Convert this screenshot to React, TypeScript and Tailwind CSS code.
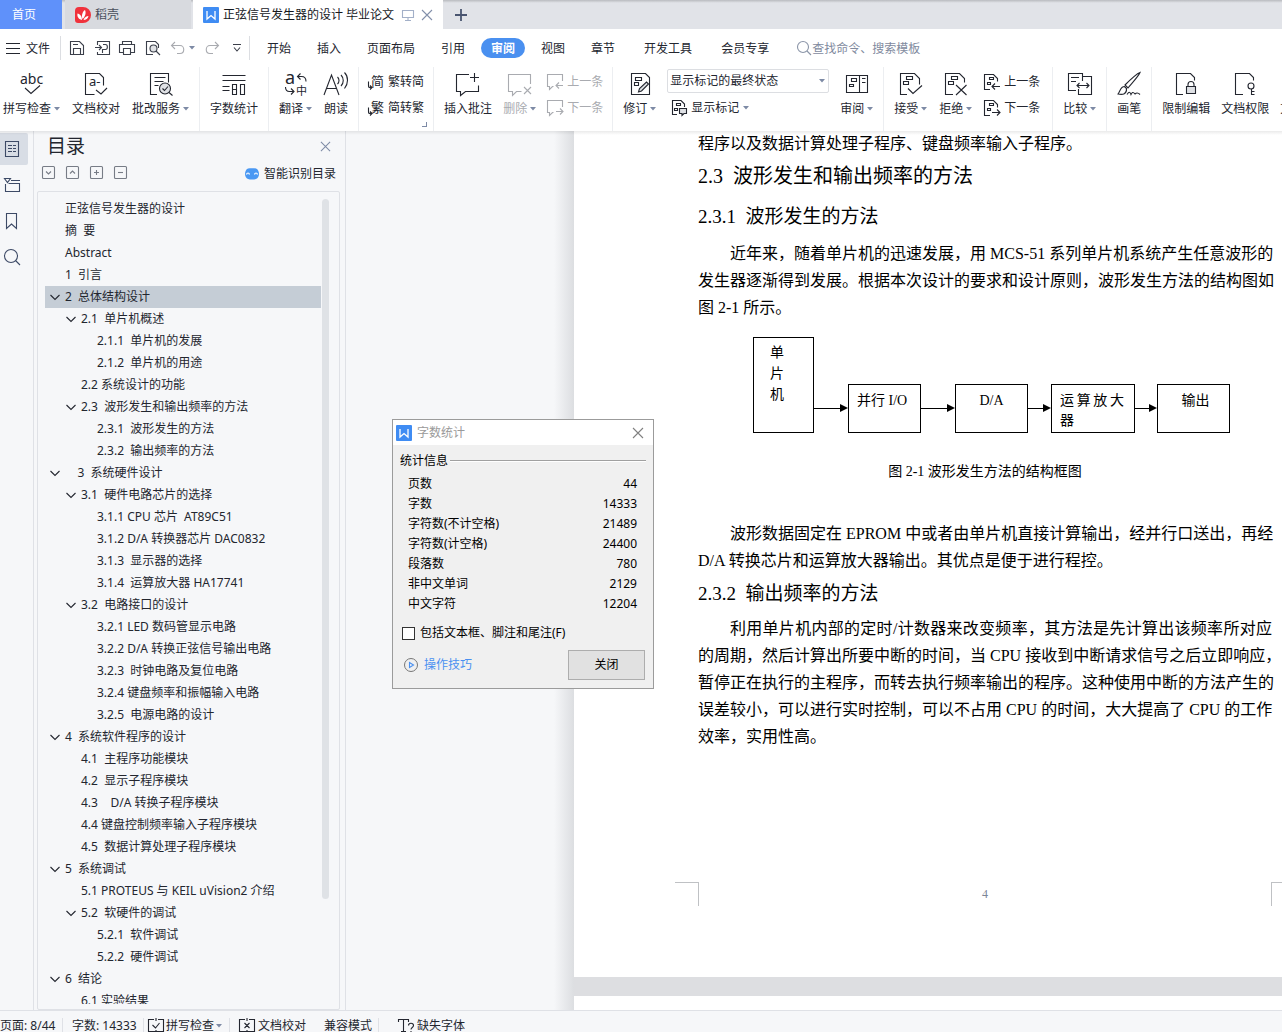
import type { ReactNode } from "react";

type IconProps = { children: ReactNode; box?: number; className?: string };

function Icon({ children, box = 24, className = "h-6 w-6" }: IconProps) {
  return (
    <svg
      aria-hidden="true"
      viewBox={`0 0 ${box} ${box}`}
      fill="none"
      stroke="currentColor"
      strokeWidth="1.1"
      className={`shrink-0 overflow-visible ${className}`}
    >
      {children}
    </svg>
  );
}

function Small({ children }: { children: ReactNode }) {
  return (
    <Icon box={16} className="h-4 w-4">
      {children}
    </Icon>
  );
}

function Caret() {
  return (
    <svg aria-hidden="true" viewBox="0 0 6 4" className="h-1 w-1.5 shrink-0 fill-[#7d8aa5]">
      <path d="M0 0h6L3 3.5z" />
    </svg>
  );
}

function Glyph({ x, y, size, children }: { x: number; y: number; size: number; children: string }) {
  return (
    <text x={x} y={y} fontSize={size} fill="currentColor" stroke="none">
      {children}
    </text>
  );
}

const marks = <path d="M7.5 4.500h6v3h-6zM4.500 9.500h5v3h-5z" />;
const smallMarks = <path d="M5.5 3.5h4v2h-4zM3.5 8.5h3v2h-3z" />;

const icons = {
  spell: (
    <Icon>
      <Glyph x={0} y={12} size={14}>abc</Glyph>
      <path d="M5 16l6 5.500 9-8" />
    </Icon>
  ),
  proof: (
    <Icon>
      <path d="M10.500 22.500h-9v-21h14l4 4v8M12 18l5 4 6-6" />
      <Glyph x={5} y={14} size={13}>a-</Glyph>
    </Icon>
  ),
  grade: (
    <Icon>
      <path d="M8 22.500H1.500v-21h18v9M5.500 5.500h11M5.500 9.500h9M5.500 13.500h4" />
      <circle cx="16" cy="16.500" r="5.500" fill="#dfe1e5" />
      <path d="M20 20.500l3.500 3M13.500 16.500l2 2 3.500-4" />
    </Icon>
  ),
  count: (
    <Icon>
      <path d="M.500 3.500h23M.500 8.500h23M.500 14.500h7M.500 18.500h7M10.500 12.500h4v10h-4zM10.500 17.500h4M18.500 12.500h4v10h-4z" />
    </Icon>
  ),
  translate: (
    <Icon>
      <Glyph x={1} y={12} size={18}>a</Glyph>
      <Glyph x={12} y={23} size={11}>中</Glyph>
      <path d="M16.500 1.500l-3 3 3 3M13.500 4.500h4c3 0 4.500 2 4.500 5M1.500 15c0 3 1 4.500 4 4.500h4M7 16.500l3 3-3 3" />
    </Icon>
  ),
  read: (
    <Icon>
      <path d="M0 23L7.500 3 15 23M3 16.500h9M13.500 5c2 2 2 5 0 7M17 3c3 3 3 8 0 11M20.500.500c4 4 4 11 0 16" />
    </Icon>
  ),
  toSimple: (
    <Small>
      <Glyph x={3} y={12} size={13}>简</Glyph>
      <path d="M.500 7.500v4c0 2 0 2 3 2M2 11.500l2 2-2 2" />
    </Small>
  ),
  toTraditional: (
    <Small>
      <Glyph x={3} y={12} size={13}>繁</Glyph>
      <path d="M.500 7.500v4c0 2 0 2 3 2M2 11.500l2 2-2 2" />
    </Small>
  ),
  comment: (
    <Icon>
      <path d="M13 2.500H.500v17h4v4l5-4h13v-6M18.500 1v9M14 5.500h9" />
    </Icon>
  ),
  remove: (
    <Icon>
      <path d="M22.500 12V2.500H.500v17h4v4l4-4h5M16 15l7 7M23 15l-7 7" />
    </Icon>
  ),
  prevComment: (
    <Small>
      <path d="M15.500 7V.500H.500v12h2v3l3-3h1M16 11.500H9M12 8.500l-3 3 3 3" />
    </Small>
  ),
  nextComment: (
    <Small>
      <path d="M15.500 7V.500H.500v12h2v3l3-3h1M9 11.500h7M13 8.500l3 3-3 3" />
    </Small>
  ),
  revise: (
    <Icon>
      <path d="M3.500 1.500h14l4 4v17h-18zM7.500 5.500h6v3h-6zM6.500 10.500h4v3h-4z" />
      <path d="M10.500 20l1-3.500 7-6.500 2 2-7 7z" fill="#dfe1e5" />
    </Icon>
  ),
  showMarks: (
    <Small>
      <path d="M6 14.500H1.500v-14H10l3.500 3.500v3" />
      {smallMarks}
      <path d="M8.500 8.500h7v5H13l-2 2v-2H8.500z" fill="#dfe1e5" />
    </Small>
  ),
  review: (
    <Icon>
      <path d="M1.500 3.500h21v17h-21zM14.500 3.500v17M6.500 6.500h5v3h-5zM4.500 12.500h4v2h-4zM17 6.500h3.500M17 10.500h3.500" />
    </Icon>
  ),
  accept: (
    <Icon>
      <path d="M8 22.500H1.500v-21h14l5 5v6M9 16.500l5 5 9-8" />
      {marks}
    </Icon>
  ),
  reject: (
    <Icon>
      <path d="M9 22.500H1.500v-21h14l5 5v4M12 13l10.500 10M22.500 13L12 23" />
      {marks}
    </Icon>
  ),
  prevChange: (
    <Small>
      <path d="M6 15.500H.500V.500h9l4 4v3M16 12.500H8M11 9.500l-3 3 3 3" />
      {smallMarks}
    </Small>
  ),
  nextChange: (
    <Small>
      <path d="M6 15.500H.500V.500h9l4 4v3M8 12.500h8M13 9.500l3 3-3 3" />
      {smallMarks}
    </Small>
  ),
  compare: (
    <Icon>
      <path d="M14.500 9V1.500H.500v17H8M14.500 4.500h9v18h-13V17M3 5.500h8M3 9.500h5M9 13.500h12M11.500 11L9 13.500l2.500 2.500M18.500 11l2.500 2.500-2.500 2.500" />
    </Icon>
  ),
  brush: (
    <Icon>
      <path d="M23 .500C19 2 12 9 8 13l3 3C15 11 21 5 23 .500zM7.500 14.500c-4 0-4 4-6.500 7.500 5 1 9 0 8.500-5.500zM10 22.500c2-3 3-3 4 0 1-2 2-3 4-.500 2-2 4-.500 5 .500" />
    </Icon>
  ),
  restrict: (
    <Icon>
      <path d="M9 22.500H2.500v-21h14l4 4v3" />
      <path d="M12.500 14.500h9v7h-9z" fill="#dfe1e5" />
      <path d="M14 14.500v-2c0-4 6-4 6 0v2" />
    </Icon>
  ),
  permission: (
    <Icon>
      <path d="M10 22.500H2.500v-21h14l4 4v3" />
      <circle cx="18" cy="14" r="3" />
      <path d="M18.500 17v6M18.500 19.500h3M18.500 22.500h3" />
    </Icon>
  ),
};

type ToolProps = { icon: ReactNode; label: string; caret?: boolean; muted?: boolean };

function Tool({ icon, label, caret, muted }: ToolProps) {
  return (
    <button className={`flex shrink-0 flex-col items-center gap-[5px] pt-[5px] ${muted ? "text-[#a9abb0]" : ""}`}>
      {icon}
      <span className="flex items-center gap-[3px] whitespace-nowrap leading-4">
        {label}
        {caret && <Caret />}
      </span>
    </button>
  );
}

function SmallTool({ icon, label, caret, muted }: ToolProps) {
  return (
    <button
      className={`flex h-[26px] items-center gap-1 whitespace-nowrap leading-4 ${muted ? "text-[#a9abb0]" : ""}`}
    >
      {icon}
      {label}
      {caret && <Caret />}
    </button>
  );
}

function Group({ children, className = "gap-[11px] px-2.5" }: { children: ReactNode; className?: string }) {
  return <div className={`flex shrink-0 border-r border-[#eceef1] ${className}`}>{children}</div>;
}

function WpsLogo() {
  return (
    <svg aria-hidden="true" viewBox="0 0 16 16" className="h-4 w-4 shrink-0">
      <rect width="16" height="16" rx="1" fill="#3f8cf3" />
      <path d="M4 4v8l4-3.500 4 3.500V4" fill="none" stroke="#fff" strokeWidth="1.300" />
    </svg>
  );
}

function Close({ className }: { className: string }) {
  return (
    <Icon box={12} className={className}>
      <path d="M1 1l10 10M11 1L1 11" />
    </Icon>
  );
}

function TitleTabs() {
  return (
    <div className="flex h-[29px] shrink-0 bg-[#e1e3e8] bg-linear-to-b from-[#b9bbbf] from-0% to-transparent to-10%">
      <button className="w-[62px] bg-[#5f91fa] pr-3.5 text-white">首页</button>
      <button className="ml-[3px] flex w-[126px] items-center gap-1 bg-[#d8dadf] pl-2.5 text-[#4a4f5c]">
        <svg aria-hidden="true" viewBox="0 0 16 16" className="h-4 w-4">
          <path d="M4 0h4a8 8 0 0 1 0 16H3a3 3 0 0 1-3-3V4a4 4 0 0 1 4-4z" fill="#f0323c" />
          <path d="M7 13C3 12 2 9 2.500 6.500 5 7 7 9 7 13zM7.500 12C6 8 8 4 10 3c1.500 3 0 7-2.500 9zM8.500 13c1-3 3-4 5-4-.500 2.500-2.500 4-5 4z" fill="#fff" />
        </svg>
        稻壳
      </button>
      <div className="ml-0.5 flex w-[250px] items-center gap-1 bg-white pl-2.5 text-[#16181d]">
        <WpsLogo />
        <span className="whitespace-nowrap">正弦信号发生器的设计 毕业论文</span>
        <span className="flex flex-1 items-center justify-between pl-1 pr-2.5 text-[#a3b0c8]">
          <Icon box={12} className="h-3 w-3">
            <path d="M.500 1.500h11v7H.500zM6 9v2.500M3 11.500h6" />
          </Icon>
          <button aria-label="关闭标签">
            <Close className="h-3 w-3 text-[#8390ab]" />
          </button>
        </span>
      </div>
      <button aria-label="新建" className="px-3 text-[#4a5570]">
        <Icon box={12} className="h-3 w-3">
          <path d="M6 0v12M0 6h12" strokeWidth="1.800" />
        </Icon>
      </button>
    </div>
  );
}

const menuTabs = [
  { name: "开始" },
  { name: "插入" },
  { name: "页面布局" },
  { name: "引用" },
  { name: "审阅", active: true },
  { name: "视图" },
  { name: "章节" },
  { name: "开发工具", wide: true },
  { name: "会员专享", wide: true },
];

function MenuBar() {
  return (
    <div className="flex h-[38px] shrink-0 items-center whitespace-nowrap bg-white">
      <button className="flex items-center gap-1.5 pl-1.5 pr-2.5">
        <Icon box={14} className="h-3.5 w-3.5">
          <path d="M0 2.500h14M0 7.500h14M0 12.500h14" />
        </Icon>
        <span className="pt-0.5">文件</span>
      </button>
      <div className="flex h-6 items-center border-x border-[#dcdee2] px-2 text-[#3b3f4a]">
        <button aria-label="保存" className="mr-2.5">
          <Small>
            <path d="M1.500 1.500h9l4 4v9h-13zM4.500 14.500v-6h7v6M4 4.500h5" />
          </Small>
        </button>
        <button aria-label="输出" className="mr-2">
          <Small>
            <path d="M2.500 5V1.500h12v13h-12V12M0 7.500h6M4 5l2.500 2.500L4 10M7.500 13V9.500h3c2.500 0 2.500-5 0-5H8" />
          </Small>
        </button>
        <button aria-label="打印" className="mr-2.5">
          <Small>
            <path d="M3.500 4.500v-3h9v3M4 12.500H.500v-8h15v8H12M4.500 8.500h7v6h-7z" />
          </Small>
        </button>
        <button aria-label="打印预览" className="mr-2.5">
          <Small>
            <path d="M8 14.500H1.500v-13h9l3 3V8" />
            <circle cx="8.500" cy="8.500" r="3.500" fill="#dfe1e5" />
            <path d="M11 11l4 4" />
          </Small>
        </button>
        <button aria-label="撤销" className="mr-1 text-[#a9abb0]">
          <Icon box={14} className="h-3.5 w-3.5">
            <path d="M4 1L.500 4.500 4 8M.500 4.500H9c5 0 5 8 0 8H6" />
          </Icon>
        </button>
        <Caret />
        <button aria-label="恢复" className="ml-2.5 mr-3.5 text-[#a9abb0]">
          <Icon box={14} className="h-3.5 w-3.5">
            <path d="M10 1l3.500 3.500L10 8M13.500 4.500H5c-5 0-5 8 0 8h3" />
          </Icon>
        </button>
        <button aria-label="更多">
          <Icon box={8} className="h-2 w-2">
            <path d="M0 .500h8M1 3.500l3 3.500 3-3.500" />
          </Icon>
        </button>
      </div>
      <nav className="flex items-center pl-1">
        {menuTabs.map((tab) =>
          tab.active ? (
            <button key={tab.name} className="mx-[3px] h-5 w-11 rounded-full bg-[#4a90f0] pt-0.5 font-bold text-white">
              {tab.name}
            </button>
          ) : (
            <button key={tab.name} className={tab.wide ? "pl-4 pr-[13px] pt-0.5" : "px-[13px] pt-0.5"}>
              {tab.name}
            </button>
          )
        )}
      </nav>
      <label className="flex items-center pl-3.5 text-[#8b95a8]">
        <Icon box={16} className="h-4 w-4">
          <circle cx="7" cy="7" r="5.500" />
          <path d="M11 11l4 4" />
        </Icon>
        <input
          type="text"
          aria-label="查找命令"
          placeholder="查找命令、搜索模板"
          className="w-32 pt-0.5 outline-none placeholder:text-[#7f8a9e]"
        />
      </label>
    </div>
  );
}

function Ribbon() {
  return (
    <div className="relative z-10 flex h-16 shrink-0 overflow-hidden bg-white">
      <Group className="gap-3 pl-[3px] pr-2.5">
        <Tool icon={icons.spell} label="拼写检查" caret />
        <Tool icon={icons.proof} label="文档校对" />
        <Tool icon={icons.grade} label="批改服务" caret />
      </Group>
      <Group>
        <Tool icon={icons.count} label="字数统计" />
      </Group>
      <Group className="gap-3 px-2.5">
        <Tool icon={icons.translate} label="翻译" caret />
        <Tool icon={icons.read} label="朗读" />
      </Group>
      <Group className="relative px-[9px]">
        <div className="pt-0.5">
          <SmallTool icon={icons.toSimple} label="繁转简" />
          <SmallTool icon={icons.toTraditional} label="简转繁" />
        </div>
        <span className="absolute bottom-1 right-1.5 h-[5px] w-[5px] border-b border-r border-[#7d8aa5]" />
      </Group>
      <Group className="gap-[11px] pl-2.5 pr-[9px]">
        <Tool icon={icons.comment} label="插入批注" />
        <Tool icon={icons.remove} label="删除" caret muted />
        <div className="pt-0.5">
          <SmallTool icon={icons.prevComment} label="上一条" muted />
          <SmallTool icon={icons.nextComment} label="下一条" muted />
        </div>
      </Group>
      <Group>
        <Tool icon={icons.revise} label="修订" caret />
        <div className="pt-0.5">
          <div className="relative">
            <select
              aria-label="标记显示方式"
              className="h-6 w-[162px] appearance-none rounded-xs border border-[#dcdee2] bg-white pl-0.5"
            >
              <option>显示标记的最终状态</option>
            </select>
            <span className="pointer-events-none absolute right-1 top-2.5">
              <Caret />
            </span>
          </div>
          <div className="pl-1 pt-0.5">
            <SmallTool icon={icons.showMarks} label="显示标记" caret />
          </div>
        </div>
        <Tool icon={icons.review} label="审阅" caret />
      </Group>
      <Group className="gap-3 pl-2.5 pr-3">
        <Tool icon={icons.accept} label="接受" caret />
        <Tool icon={icons.reject} label="拒绝" caret />
        <div className="pt-0.5">
          <SmallTool icon={icons.prevChange} label="上一条" />
          <SmallTool icon={icons.nextChange} label="下一条" />
        </div>
      </Group>
      <Group>
        <Tool icon={icons.compare} label="比较" caret />
      </Group>
      <Group>
        <Tool icon={icons.brush} label="画笔" />
      </Group>
      <Group>
        <Tool icon={icons.restrict} label="限制编辑" />
        <Tool icon={icons.permission} label="文档权限" />
        <Tool icon={icons.proof} label="文档认证" />
      </Group>
    </div>
  );
}

function Rail() {
  return (
    <div className="flex w-[34px] shrink-0 flex-col border-r border-[#dfe1e6] pt-0.5 text-[#3d4a66]">
      <button aria-label="目录" className="flex h-8 w-7 items-center justify-center rounded-r-xs bg-[#d8dde5] pr-1">
        <Small>
          <path d="M1.500.500h13v15h-13zM4 4.500h4M9 4.500h3M4 7.500h4M9 7.500h3M4 10.500h4M9 10.500h3" />
        </Small>
      </button>
      <button aria-label="章节" className="flex h-9 w-7 items-center justify-center pr-1 pt-1">
        <Small>
          <path d="M.500 1.500h6l-3 4zM7 3.500h9M1.500 7v7.500h14v-8h-11" />
        </Small>
      </button>
      <button aria-label="书签" className="flex h-9 w-7 items-center justify-center pr-1 pt-1">
        <Small>
          <path d="M2.500.500h10v15l-5-4.500-5 4.500z" />
        </Small>
      </button>
      <button aria-label="查找" className="flex h-9 w-7 items-center justify-center pr-1 pt-1">
        <Small>
          <circle cx="7" cy="7" r="6.500" />
          <path d="M11.500 11.500L16 16" />
        </Small>
      </button>
    </div>
  );
}

const outline = [
  { level: 1, text: "正弦信号发生器的设计" },
  { level: 1, text: "摘  要" },
  { level: 1, text: "Abstract" },
  { level: 1, text: "1  引言" },
  { level: 1, text: "2  总体结构设计", open: true, selected: true },
  { level: 2, text: "2.1  单片机概述", open: true },
  { level: 3, text: "2.1.1  单片机的发展" },
  { level: 3, text: "2.1.2  单片机的用途" },
  { level: 2, text: "2.2 系统设计的功能" },
  { level: 2, text: "2.3  波形发生和输出频率的方法", open: true },
  { level: 3, text: "2.3.1  波形发生的方法" },
  { level: 3, text: "2.3.2  输出频率的方法" },
  { level: 1, text: "    3  系统硬件设计", open: true },
  { level: 2, text: "3.1  硬件电路芯片的选择", open: true },
  { level: 3, text: "3.1.1 CPU 芯片  AT89C51" },
  { level: 3, text: "3.1.2 D/A 转换器芯片 DAC0832" },
  { level: 3, text: "3.1.3  显示器的选择" },
  { level: 3, text: "3.1.4  运算放大器 HA17741" },
  { level: 2, text: "3.2  电路接口的设计", open: true },
  { level: 3, text: "3.2.1 LED 数码管显示电路" },
  { level: 3, text: "3.2.2 D/A 转换正弦信号输出电路" },
  { level: 3, text: "3.2.3  时钟电路及复位电路" },
  { level: 3, text: "3.2.4 键盘频率和振幅输入电路" },
  { level: 3, text: "3.2.5  电源电路的设计" },
  { level: 1, text: "4  系统软件程序的设计", open: true },
  { level: 2, text: "4.1  主程序功能模块" },
  { level: 2, text: "4.2  显示子程序模块" },
  { level: 2, text: "4.3    D/A 转换子程序模块" },
  { level: 2, text: "4.4 键盘控制频率输入子程序模块" },
  { level: 2, text: "4.5  数据计算处理子程序模块" },
  { level: 1, text: "5  系统调试", open: true },
  { level: 2, text: "5.1 PROTEUS 与 KEIL uVision2 介绍" },
  { level: 2, text: "5.2  软硬件的调试", open: true },
  { level: 3, text: "5.2.1  软件调试" },
  { level: 3, text: "5.2.2  硬件调试" },
  { level: 1, text: "6  结论", open: true },
  { level: 2, text: "6.1 实验结果" },
];

const indents: Record<number, string> = { 1: "pl-[5px]", 2: "pl-[21px]", 3: "pl-[37px]" };

const outlineActions = [
  { name: "展开", path: "M4 5.500L6.500 8 9 5.500" },
  { name: "收起", path: "M4 7.500L6.500 5 9 7.500" },
  { name: "增加", path: "M6.500 4v5M4 6.500h5" },
  { name: "减少", path: "M4 6.500h5" },
];

function OutlinePanel() {
  return (
    <aside className="flex w-[312px] shrink-0 flex-col border-r border-[#dfe1e6] pl-[3px] pr-[5px]">
      <div className="flex h-[30px] items-center justify-between pl-2.5 pr-[9px]">
        <h2 className="text-[19px] leading-6">目录</h2>
        <button aria-label="关闭目录" className="text-[#7d8aa5]">
          <Close className="h-[11px] w-[11px]" />
        </button>
      </div>
      <div className="flex h-[30px] items-start justify-between pl-[5px] pt-1">
        <div className="flex gap-[11px] pt-px text-[#777c86]">
          {outlineActions.map((action) => (
            <button key={action.name} aria-label={action.name}>
              <Icon box={13} className="h-[13px] w-[13px]">
                <rect x=".5" y=".5" width="12" height="12" rx="1" />
                <path d={action.path} />
              </Icon>
            </button>
          ))}
        </div>
        <button className="flex items-center gap-[5px] pr-1 pt-px leading-4">
          <svg aria-hidden="true" viewBox="0 0 14 12" className="h-3 w-3.5">
            <path d="M3 .500C5 0 9 0 11 .500 13 1 14 4 14 6s-1 4.500-3 5c-2 .700-6 .700-8 0-2-.500-3-3-3-5S1 1 3 .500z" fill="#4a98f3" />
            <path d="M1.500 6.500c.500-2 2.500-2 3 0M9.500 6.500c.500-2 2.500-2 3 0" fill="none" stroke="#fff" strokeWidth="1.200" />
          </svg>
          智能识别目录
        </button>
      </div>
      <div className="flex min-h-0 flex-1 gap-px rounded-xs border border-[#dfe1e6] pb-[5px] pl-[7px] pr-2.5 pt-1.5">
        <ul className="min-h-0 flex-1 overflow-hidden">
          {outline.map((item) => (
            <li
              key={item.text}
              className={`flex h-[22px] items-center gap-[5px] whitespace-pre ${indents[item.level]} ${
                item.selected ? "bg-[#c5cdd6]" : ""
              }`}
            >
              <Icon box={10} className="h-2.5 w-2.5">
                {item.open && <path d="M.500 3L5 7.500 9.500 3" />}
              </Icon>
              <a href="#outline">{item.text}</a>
            </li>
          ))}
        </ul>
        <div className="mb-[105px] mt-px w-[7px] rounded-full bg-[#dfe2e6]" />
      </div>
    </aside>
  );
}

function Arrow({ className }: { className: string }) {
  return (
    <div className={`mb-5 flex h-2.5 shrink-0 items-center ${className}`}>
      <div className="h-px flex-1 bg-black" />
      <svg aria-hidden="true" viewBox="0 0 8 8" className="h-2 w-2">
        <path d="M0 0l8 4-8 4z" />
      </svg>
    </div>
  );
}

function Line({ children, indent }: { children: string; indent?: boolean }) {
  return (
    <span className={`block whitespace-nowrap [text-align-last:justify] ${indent ? "pl-8" : ""}`}>{children}</span>
  );
}

function BlockDiagram() {
  return (
    <div className="mt-4 flex items-end pl-[55px] text-sm leading-5">
      <div className="h-24 w-[61px] shrink-0 border border-black px-4 pt-1 leading-[21px]">
        单
        <br />片
        <br />机
      </div>
      <Arrow className="w-[34px]" />
      <div className="h-[49px] w-[73px] shrink-0 whitespace-nowrap border border-black pl-2 pt-1.5">并行 I/O</div>
      <Arrow className="w-[34px]" />
      <div className="h-[49px] w-[73px] shrink-0 border border-black pt-1.5 text-center">D/A</div>
      <Arrow className="w-[23px]" />
      <div className="h-[49px] w-[84px] shrink-0 border border-black pl-2 pr-2.5 pt-1.5">
        <Line>运算放大</Line>器
      </div>
      <Arrow className="w-[22px]" />
      <div className="h-[49px] w-[73px] shrink-0 border border-black pl-1 pt-1.5 text-center">输出</div>
    </div>
  );
}

function Document() {
  return (
    <main className="flex min-w-0 flex-1 overflow-hidden pl-[208px]">
      <div className="w-5 shrink-0 bg-linear-to-r from-[#f6f7f9] to-[#dcdee1]" />
      <div className="flex min-w-0 flex-1 flex-col overflow-hidden bg-[#dddee1] font-['Liberation_Serif','Noto_Sans_CJK_SC',serif] text-base leading-[27px] text-black">
        <article className="flex h-[846px] w-[822px] shrink-0 flex-col bg-white">
          <div className="w-[698px] pl-[124px]">
            <p className="-mt-px">程序以及数据计算处理子程序、键盘频率输入子程序。</p>
            <h2 className="whitespace-pre pt-[3px] text-xl leading-8">2.3  波形发生和输出频率的方法</h2>
            <h3 className="mb-[7px] mt-[9px] whitespace-pre text-[19px] leading-8">2.3.1  波形发生的方法</h3>
            <p>
              <Line indent>近年来，随着单片机的迅速发展，用 MCS-51 系列单片机系统产生任意波形的</Line>
              <Line>发生器逐渐得到发展。根据本次设计的要求和设计原则，波形发生方法的结构图如</Line>
              图 2-1 所示。
            </p>
            <BlockDiagram />
            <p className="mt-[25px] text-center text-sm leading-7">图 2-1 波形发生方法的结构框图</p>
            <p className="mt-[34px]">
              <Line indent>波形数据固定在 EPROM 中或者由单片机直接计算输出，经并行口送出，再经</Line>
              D/A 转换芯片和运算放大器输出。其优点是便于进行程控。
            </p>
            <h3 className="mb-[5px] mt-1 whitespace-pre text-[19px] leading-8">2.3.2  输出频率的方法</h3>
            <p>
              <Line indent>利用单片机内部的定时/计数器来改变频率，其方法是先计算出该频率所对应</Line>
              <Line>的周期，然后计算出所要中断的时间，当 CPU 接收到中断请求信号之后立即响应，</Line>
              <Line>暂停正在执行的主程序，而转去执行频率输出的程序。这种使用中断的方法产生的</Line>
              <Line>误差较小，可以进行实时控制，可以不占用 CPU 的时间，大大提高了 CPU 的工作</Line>
              效率，实用性高。
            </p>
          </div>
          <footer className="mb-[71px] mt-auto flex h-6 justify-between px-[101px] text-xs leading-6 text-[#7b8596]">
            <span className="w-6 border-r border-t border-[#bfc1c4]" />
            4
            <span className="w-6 border-l border-t border-[#bfc1c4]" />
          </footer>
        </article>
        <div className="mt-[19px] w-[822px] flex-1 bg-white" />
      </div>
    </main>
  );
}

const stats = [
  ["页数", "44"],
  ["字数", "14333"],
  ["字符数(不计空格)", "21489"],
  ["字符数(计空格)", "24400"],
  ["段落数", "780"],
  ["非中文单词", "2129"],
  ["中文字符", "12204"],
];

function WordCountDialog() {
  return (
    <div
      role="dialog"
      aria-label="字数统计"
      className="absolute left-[392px] top-72 z-20 w-[262px] border border-[#9b9b9b] bg-[#f0f0f0] text-black"
    >
      <div className="flex h-[25px] items-center gap-[5px] bg-white pl-[3px] pr-[9px] text-[#9a9a9a]">
        <WpsLogo />
        <span className="flex-1">字数统计</span>
        <button aria-label="关闭窗口" className="text-[#808080]">
          <Close className="h-3 w-3" />
        </button>
      </div>
      <div className="flex h-[29px] items-center gap-0.5 pl-[7px] pr-[7px] pt-[3px]">
        统计信息
        <span className="h-0.5 flex-1 border-t border-[#a0a0a0] bg-white" />
      </div>
      <table className="mx-[15px] w-[229px]">
        <tbody>
          {stats.map(([name, value]) => (
            <tr key={name} className="h-5">
              <th scope="row" className="p-0 text-left font-normal">{name}</th>
              <td className="p-0 text-right">{value}</td>
            </tr>
          ))}
        </tbody>
      </table>
      <label className="mt-[7px] flex h-6 items-center gap-[5px] pl-[9px]">
        <input type="checkbox" className="h-[13px] w-[13px] appearance-none border border-[#333] bg-white" />
        包括文本框、脚注和尾注(F)
      </label>
      <div className="flex items-center justify-between pb-2 pl-[11px] pr-2 pt-[5px]">
        <a href="#tips" className="flex items-center gap-1.5 text-[#4a90f0]">
          <Icon box={14} className="h-3.5 w-3.5">
            <circle cx="7" cy="7" r="6.500" stroke="#777" strokeWidth="1" />
            <path d="M5.500 4.500v5L9.500 7z" />
          </Icon>
          操作技巧
        </a>
        <button className="h-[30px] w-[77px] border border-[#adadad] bg-[#e1e1e1]">关闭</button>
      </div>
    </div>
  );
}

function StatusBar() {
  return (
    <footer className="h-[22px] shrink-0 overflow-hidden border-t border-[#dfe1e6]">
      <div className="flex h-[30px] items-center whitespace-nowrap leading-4">
        <span className="w-[63px] border-r border-[#dfe1e6]">页面: 8/44</span>
        <span className="w-[81px] border-r border-[#dfe1e6] pl-[9px]">字数: 14333</span>
        <button className="flex w-[86px] items-center gap-0.5 border-r border-[#dfe1e6] pl-1">
          <Small>
            <path d="M6 1.500H.500v12h15v-12H10M8 0v3M8 12v3M4.500 7l3 3 4-5" />
          </Small>
          拼写检查
          <Caret />
        </button>
        <button className="flex items-center gap-[3px] pl-[9px]">
          <Small>
            <path d="M6 1.500H.500v12h15v-12H10M8 0v3M8 12v3M5.500 5l5 5M10.500 5l-5 5" />
          </Small>
          文档校对
        </button>
        <span className="ml-2 w-[65px] border-r border-[#dfe1e6] pl-2.5">兼容模式</span>
        <button className="flex items-center gap-[3px] pl-[19px]">
          <Small>
            <path d="M.500 4V1.500h10V4M5.500 1.500v12M3 13.500h5M10.500 7.500c0-3 5-3 5 0 0 2-2.500 2-2.500 4M13 13v1.500" />
          </Small>
          缺失字体
        </button>
      </div>
    </footer>
  );
}

export default function App() {
  return (
    <div className="flex h-screen flex-col overflow-hidden bg-[#f6f7f9] font-['Noto_Sans','Noto_Sans_CJK_SC',sans-serif] text-xs text-[#23262f]">
      <TitleTabs />
      <MenuBar />
      <Ribbon />
      <div className="relative flex min-h-0 flex-1">
        <div className="pointer-events-none absolute inset-x-0 top-0 z-10 h-1 bg-linear-to-b from-black/8 to-transparent" />
        <Rail />
        <OutlinePanel />
        <Document />
        <WordCountDialog />
      </div>
      <StatusBar />
    </div>
  );
}
